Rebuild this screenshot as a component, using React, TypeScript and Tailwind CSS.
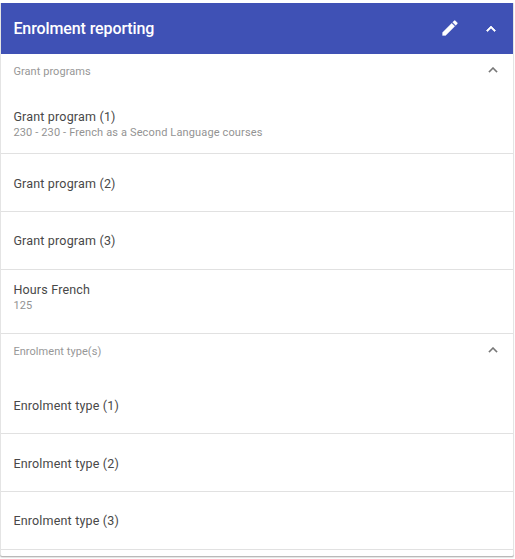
const Chevron = ({ className, size, weight }: { className: string; size: number; weight: number }) => (
  <svg className={className} width={size} height={size} viewBox="0 0 24 24" fill="currentColor" stroke="currentColor" strokeWidth={weight}>
    <path d="M12 8l-6 6 1.41 1.41L12 10.83l4.59 4.58L18 14z" />
  </svg>
);

function SubHeader({ label, className }: { label: string; className: string }) {
  return (
    <div className={`flex justify-between pl-[12.4px] pr-[11px] text-[11px] leading-[16px] tracking-[0.06px] text-[#979797] ${className}`}>
      <span className="pt-[3px]">{label}</span>
      <Chevron size={18} weight={0.3} className="text-[#777]" />
    </div>
  );
}

function Item({ title, detail, className }: { title: string; detail?: string; className: string }) {
  return (
    <div className={`border-b border-[#e1e1e1] pl-[12.4px] ${className}`}>
      <div className="text-[12.5px] leading-[16px] tracking-[0.18px] text-[#484848]">{title}</div>
      {detail && <div className="text-[11px] leading-[16px] tracking-[0.14px] text-[#939393]">{detail}</div>}
    </div>
  );
}

export default function App() {
  return (
    <div className="h-[559px] w-[515px] overflow-hidden bg-white pt-[3px] font-[Roboto,sans-serif]">
      <div className="h-[553px] w-[514px] rounded-b-[2px] border-x border-[#e4e4e4] bg-white shadow-[0_1px_0_#b9b9b9,0_2px_1px_#e4e4e4]">
        <header className="flex h-[51px] items-center bg-[#3f51b5] pl-[12.4px] pr-[13px] text-white">
          <h1 className="flex-1 text-[16px] font-medium tracking-[-0.1px]">Enrolment reporting</h1>
          <svg className="mb-px mr-[22px]" width="20" height="20" viewBox="0 0 24 24" fill="currentColor" stroke="currentColor" strokeWidth="0.3">
            <path d="M3 17.25V21h3.75L17.81 9.94l-3.75-3.75L3 17.25zM20.71 7.04a.996.996 0 0 0 0-1.41l-2.34-2.34a.996.996 0 0 0-1.41 0l-1.83 1.83 3.75 3.75 1.83-1.83z" />
          </svg>
          <Chevron size={18} weight={1} className="" />
        </header>
        <SubHeader label="Grant programs" className="h-[47px] pt-[7px]" />
        <Item title="Grant program (1)" detail="230 - 230 - French as a Second Language courses" className="h-[53px] pt-[8px]" />
        <Item title="Grant program (2)" className="h-[58px] pt-[22px]" />
        <Item title="Grant program (3)" className="h-[58px] pt-[21px]" />
        <Item title="Hours French" detail="125" className="h-[64px] pt-[12px]" />
        <SubHeader label="Enrolment type(s)" className="h-[42px] pt-[7px]" />
        <Item title="Enrolment type (1)" className="h-[58px] pt-[22px]" />
        <Item title="Enrolment type (2)" className="h-[58px] pt-[22px]" />
        <Item title="Enrolment type (3)" className="h-[58px] pt-[21px]" />
      </div>
    </div>
  );
}
